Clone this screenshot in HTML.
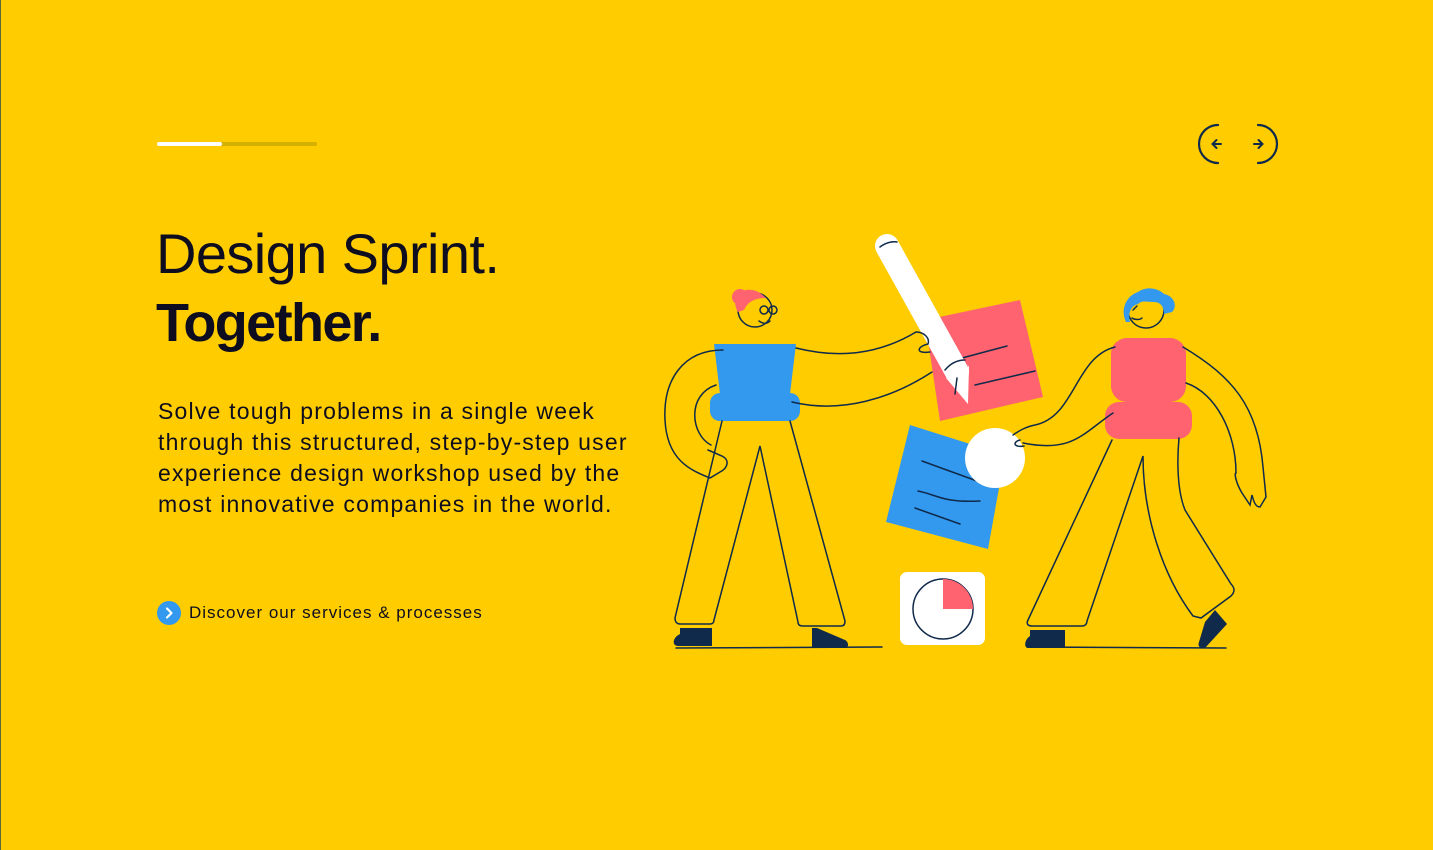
<!DOCTYPE html>
<html><head><meta charset="utf-8"><style>
html,body{margin:0;padding:0}
body{width:1433px;height:850px;background:#ffcc00;position:relative;overflow:hidden;font-family:"Liberation Sans",sans-serif;color:#0d0d1f}
.edge{position:absolute;left:0;top:0;width:1px;height:850px;background:#5a6a3a}
.bar{position:absolute;left:157px;top:142px;width:160px;height:4px;border-radius:2px;background:#d4b000}
.bar i{position:absolute;left:0;top:0;width:65px;height:4px;border-radius:2px;background:#fff}
h1{position:absolute;left:156px;top:220px;margin:0;font-weight:400;font-size:56px;line-height:68px;letter-spacing:-0.6px}
h1 b{font-weight:700;letter-spacing:-1.6px;font-size:54px}
p{position:absolute;left:158px;top:396px;margin:0;font-size:23px;line-height:31px;width:540px;letter-spacing:1.2px}
.link{position:absolute;left:157px;top:601px;font-size:17px;line-height:24px;display:flex;align-items:center;gap:8px;letter-spacing:1px}
.link span{width:24px;height:24px;border-radius:50%;background:#3399ee;display:inline-block;position:relative}
</style></head><body>
<div class="edge"></div>
<div class="bar"><i></i></div>
<h1>Design Sprint.<br><b>Together.</b></h1>
<p>Solve tough problems in a single week<br>through this structured, step-by-step user<br>experience design workshop used by the<br>most innovative companies in the world.</p>
<div class="link"><span><svg width="24" height="24" viewBox="0 0 24 24"><path d="M10 7.5l4.5 4.5-4.5 4.5" stroke="#fff" stroke-width="2.2" fill="none" stroke-linecap="round" stroke-linejoin="round"/></svg></span>Discover our services &amp; processes</div>
<svg width="1433" height="850" style="position:absolute;left:0;top:0" fill="none" stroke="#0f2a4a" stroke-width="1.5" stroke-linecap="round">
<path d="M1218 125a19 19 0 0 0 0 38" stroke-width="2.2"/>
<path d="M1258 125a19 19 0 0 1 0 38" stroke-width="2.2"/>
<path d="M1221 144h-8M1216.5 140l-4 4 4 4" stroke-width="2"/>
<path d="M1254 144h8M1258.5 140l4 4-4 4" stroke-width="2"/>
<polygon points="925,320 1020,300 1043,397 940,421" fill="#ff6370" stroke="none"/>
<path d="M975 385l60-14M962 358l45-12"/>
<polygon points="910,425 1005,455 988,549 886,522" fill="#3399ee" stroke="none"/>
<path d="M922 461l55 20M918 491c20 4 25 12 62 10M915 508l45 16"/>
<ellipse cx="995" cy="458" rx="30" ry="30" fill="#fff" stroke="none"/>
<rect x="900" y="572" width="85" height="73" rx="7" fill="#fff" stroke="none"/>
<circle cx="943" cy="609" r="30"/>
<path d="M943 579a30 30 0 0 1 30 30h-30z" fill="#ff6370" stroke="none"/>
<path d="M887 246L957 372" stroke="#fff" stroke-width="24"/>
<polygon points="946,378 969,366 968,404" fill="#fff" stroke="none"/>
<path d="M880 247c5-4 12-6 17-5M945 370c5-6 12-10 20-10M957 378l-2 16"/>
<circle cx="755" cy="310" r="17" fill="#ffcc00"/>
<path d="M738 312c-6-10-2-20 8-22 8-1 14 2 20 8-10 0-18 3-22 12z" fill="#ff6370" stroke="none"/>
<circle cx="740" cy="297" r="8" fill="#ff6370" stroke="none"/>
<circle cx="764" cy="310" r="4"/><circle cx="773" cy="310" r="4"/>
<path d="M759 321c4 3 8 3 11 0"/>
<path d="M714 344h82l-6 50h-70z" fill="#3399ee" stroke="none"/>
<rect x="710" y="393" width="90" height="28" rx="10" fill="#3399ee" stroke="none"/>
<path d="M796 348c40 10 80 8 120-16 8 0 14 6 12 12-10 2-14 10 2 8M792 402c50 12 100-4 140-30"/>
<path d="M723 350c-40 0-60 30-58 70 2 40 25 50 45 58l10-6c8-4 10-12 2-16l-14-6M716 385c-30 10-25 50-5 60"/>
<path d="M722 421L675 618c0 4 2 6 5 6h30c3 0 4-2 4-4L760 446l38 176c0 3 2 4 5 4h38c3 0 4-2 4-5L790 421"/>
<path d="M680 628l32 0v18h-34c-6 0-6-8 2-12z" fill="#0f2a4a" stroke="none"/>
<path d="M812 628l5 0 28 12c4 2 4 8 0 8h-33z" fill="#0f2a4a" stroke="none"/>
<path d="M676 648l206-1"/>
<circle cx="1146" cy="310" r="18" fill="#ffcc00"/>
<path d="M1126 322c-6-12 0-26 12-30 8-6 20-4 26 2 10 2 14 12 8 18l-8 2c0-8-4-12-10-12-8 0-12-2-16 2-8 2-10 10-8 18z" fill="#3399ee" stroke="none"/>
<path d="M1132 318c3 2 8 2 10 0M1133 310l4-4"/>
<rect x="1111" y="338" width="75" height="64" rx="16" fill="#ff6370" stroke="none"/>
<rect x="1105" y="402" width="87" height="37" rx="14" fill="#ff6370" stroke="none"/>
<path d="M1115 347c-40 10-40 70-80 78-10 2-16 6-22 10M1113 413c-30 20-40 40-90 30M1020 440c-8 2-6 8 4 6"/>
<path d="M1183 347c50 30 75 60 80 120l3 30-6 10c-4 0-6-4-8-12l-2 10-8-12c-6-10-8-20-6-20 0-40-20-80-50-90"/>
<path d="M1112 440L1028 620c-2 4 0 6 4 6h50c3 0 5-2 5-5L1143 456c0 60 20 120 50 160l8 2 30-22c4-4 4-8 0-12L1185 510c-8-20-8-50-6-72"/>
<path d="M1030 630h35v18h-37c-4 0-4-8 2-12z" fill="#0f2a4a" stroke="none"/>
<path d="M1215 610l12 14-22 24c-4 2-8-2-6-6l6-20z" fill="#0f2a4a" stroke="none"/>
<path d="M1028 647l198 1"/>
</svg>
</body></html>
